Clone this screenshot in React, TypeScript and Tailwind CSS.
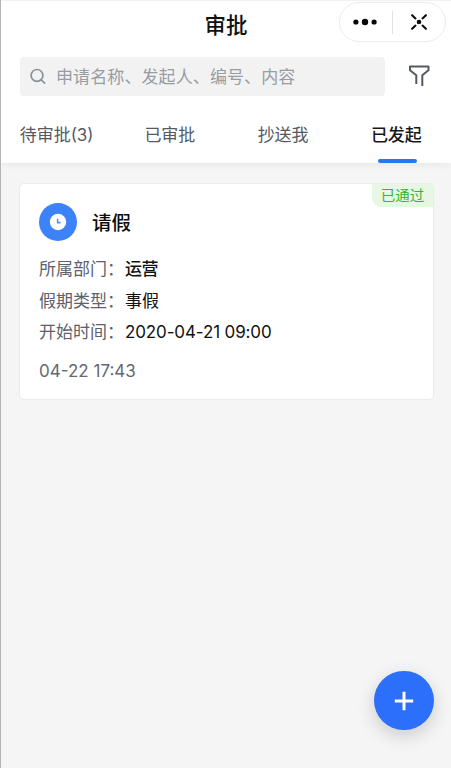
import React from "react";

const tabs = ["待审批(3)", "已审批", "抄送我", "已发起"];

const rows = [
  { label: "所属部门：", value: "运营", style: "font-medium tracking-[-0.5px]" },
  { label: "假期类型：", value: "事假", style: "font-normal" },
  { label: "开始时间：", value: "2020-04-21 09:00", style: "font-normal tracking-[-0.13px]" },
];

function Capsule() {
  return (
    <div className="absolute left-[338px] top-[2px] flex h-[40px] w-[107px] items-center rounded-full border border-[#ebebeb] bg-white">
      <svg className="h-full w-[52px]" viewBox="0 0 52 38" fill="#080808">
        <circle cx="15.9" cy="19" r="2.6" />
        <circle cx="25" cy="19" r="3.2" />
        <circle cx="34.1" cy="19" r="2.6" />
      </svg>
      <span className="h-[23px] w-px bg-[#e2e2e2]" />
      <svg className="h-full w-[51px]" viewBox="0 0 51 38" fill="none" stroke="#0c0c0c" strokeWidth="2.1" strokeLinecap="round">
        <circle cx="26" cy="19" r="2.3" fill="#0c0c0c" stroke="none" />
        <path d="M19.1 12.2l3.4 3.2M32.9 12.2l-3.4 3.2M19.1 25.8l3.4-3.2M32.9 25.8l-3.4-3.2" />
      </svg>
    </div>
  );
}

export default function App() {
  return (
    <div className="relative flex h-[768px] w-full flex-col overflow-hidden border-l border-[#b4b4b4] bg-[#f5f5f5] font-[Inter,'Noto_Sans_CJK_SC',sans-serif] text-[17px]">
      <header className="h-[163px] shrink-0 border-t border-[#f1f1f1] bg-white shadow-[0_1px_8px_rgba(0,0,0,0.07)]">
        <h1 className="h-[56px] pt-[9px] text-center text-[21.5px] leading-[30px] font-medium text-[#111]">审批</h1>
        <Capsule />
        <div className="flex items-center pl-[19px]">
          <div className="flex h-[39px] w-[365px] items-center rounded-[4px] bg-[#f2f2f2] pl-[10px] text-[#989ca3]">
            <svg className="mr-[9px] h-[17px] w-[17px]" viewBox="0 0 17 17" fill="none" stroke="#8c9099" strokeWidth="1.7" strokeLinecap="round">
              <circle cx="7" cy="7.4" r="5.9" />
              <path d="M11.4 12l3.2 3.2" />
            </svg>
            <span className="tracking-[0.1px] leading-[24px]">申请名称、发起人、编号、内容</span>
          </div>
          <svg className="ml-[23px] h-[24px] w-[24px]" viewBox="0 0 24 24" fill="none" stroke="#555963" strokeWidth="2" strokeLinejoin="round">
            <path d="M8.3 19V10.3L2 5.2V1.6H20.5V5.2L14.3 10.3V21" />
          </svg>
        </div>
        <nav className="-ml-[1px] grid h-[67px] w-[453px] grid-cols-4">
          {tabs.map((tab, i) => (
            <div
              key={tab}
              className={
                i === 3
                  ? "relative pt-[26px] text-center leading-[26px] font-medium text-[#17181b]"
                  : "relative pt-[26px] text-center leading-[26px] text-[#555962]"
              }
            >
              {tab}
              {i === 3 && <span className="absolute bottom-0 left-[38px] h-[4px] w-[39px] rounded-[2px] bg-[#2878ec]" />}
            </div>
          ))}
        </nav>
      </header>

      <main className="px-[18px] pt-[20px]">
        <article className="relative h-[217px] w-[415px] rounded-[5px] border border-[#ebebeb] bg-white pt-[19px] pl-[19px]">
          <span className="absolute top-0 right-0 flex h-[23px] w-[61px] items-center justify-center rounded-bl-[9px] rounded-tr-[4px] bg-[#e7f7e5] text-[14.5px] text-[#35b52c]">
            已通过
          </span>
          <div className="flex h-[38px] items-center">
            <svg className="h-[38px] w-[38px]" viewBox="0 0 38 38" fill="none">
              <circle cx="19" cy="19" r="19" fill="#3c82f8" />
              <circle cx="19" cy="19" r="8.2" fill="#fff" />
              <path d="M18.6 15.8V19.6H21.6" stroke="#5b8df0" strokeWidth="1.6" />
            </svg>
            <h2 className="mt-[2px] ml-[15px] text-[19.5px] leading-[28px] font-medium text-[#0c0c0c]">请假</h2>
          </div>
          <dl className="mt-[13px]">
            {rows.map((row) => (
              <div key={row.label} className="flex h-[31.5px] items-center">
                <dt className="w-[86px] whitespace-nowrap text-[#5d616b]">{row.label}</dt>
                <dd className={`${row.style} text-[#121212]`}>{row.value}</dd>
              </div>
            ))}
          </dl>
          <time className="mt-[10px] block leading-[24px] text-[#646872]">04-22 17:43</time>
        </article>
      </main>

      <button className="absolute left-[373px] top-[671px] flex h-[59px] w-[60px] items-center justify-center rounded-full bg-[#2c6ffb] shadow-[0_6px_18px_rgba(0,0,0,0.17)]">
        <svg className="h-[20px] w-[20px]" viewBox="0 0 20 20" fill="none" stroke="#fff" strokeWidth="3">
          <path d="M10 .8V19.2M.8 10H19.2" />
        </svg>
      </button>
    </div>
  );
}
